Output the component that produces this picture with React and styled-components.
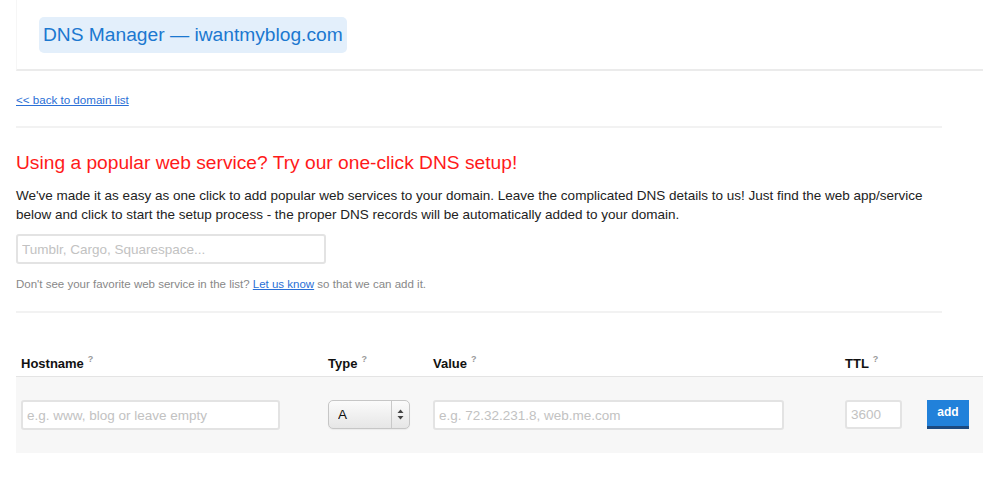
import React from "react";
import styled, { createGlobalStyle } from "styled-components";

const GlobalStyle = createGlobalStyle`
  body {
    margin: 0;
    background: #fff;
    font-family: "Liberation Sans", Arial, sans-serif;
    color: #222;
  }
`;

const Page = styled.div`
  padding-left: 16px;
  width: 967px;
`;

const Header = styled.div`
  height: 71px;
  box-sizing: border-box;
  padding: 17px 0 0 22px;
  border-left: 1px solid #f6f6f6;
  border-bottom: 2px solid #ebebeb;
`;

const Title = styled.h1`
  display: inline-block;
  margin: 0;
  padding: 0 4px;
  height: 36px;
  line-height: 36px;
  background: #e3effb;
  border-radius: 5px;
  color: #1b78d0;
  font-size: 19.2px;
  font-weight: normal;
`;

const Content = styled.div`
  width: 926px;
`;

const BackLink = styled.a`
  display: block;
  margin-top: 22px;
  font-size: 11.6px;
  line-height: 13px;
  color: #2a6fd6;
  text-decoration: underline;
`;

const Divider = styled.hr`
  margin: ${(p) => p.$top}px 0 0;
  border: 0;
  height: 2px;
  background: #f2f2f2;
`;

const Heading = styled.h2`
  margin: 23px 0 0;
  font-size: 19.2px;
  line-height: 24px;
  font-weight: normal;
  color: #ff1a1a;
`;

const Intro = styled.p`
  margin: 11px 0 0;
  font-size: 13.5px;
  line-height: 19px;
  color: #222;
`;

const TextInput = styled.input`
  box-sizing: border-box;
  width: ${(p) => p.$width}px;
  height: ${(p) => p.$height || 30}px;
  padding: 0 4px;
  border: 2px solid #e3e3e3;
  border-radius: 3px;
  background: #fff;
  font-family: inherit;
  font-size: 13.5px;
  color: #333;
  outline: none;
  &::placeholder {
    color: #c2c2c2;
  }
`;

const SearchRow = styled.div`
  margin-top: 10px;
  display: flex;
`;

const Note = styled.p`
  margin: 13px 0 0;
  font-size: 11.5px;
  line-height: 14px;
  color: #888;
  a {
    color: #2a6fd6;
  }
`;

const Table = styled.div`
  margin-top: 38px;
  width: 967px;
`;

const columns = "307px 105px 412px 82px 1fr";

const HeadRow = styled.div`
  display: grid;
  grid-template-columns: ${columns};
  padding: 0 0 4px 5px;
  border-bottom: 1px solid #e4e4e4;
`;

const HeadCell = styled.div`
  font-size: 13px;
  font-weight: bold;
  line-height: 16px;
  color: #111;
`;

const Hint = styled.sup`
  margin-left: 4px;
  font-size: 9px;
  font-weight: bold;
  color: #999;
  vertical-align: 6px;
`;

const EntryRow = styled.div`
  display: grid;
  grid-template-columns: ${columns};
  align-items: start;
  padding: 23px 0 23px 5px;
  background: #f7f7f7;
`;

const SelectBox = styled.div`
  box-sizing: border-box;
  display: flex;
  width: 82px;
  height: 29px;
  border: 1px solid #c6c6c6;
  border-radius: 5px;
  background: linear-gradient(#fbfbfb, #e6e6e6);
  box-shadow: 0 1px 1px rgba(0, 0, 0, 0.05);
`;

const SelectValue = styled.select`
  flex: 1;
  appearance: none;
  border: 0;
  background: transparent;
  padding: 0 0 0 9px;
  font-family: inherit;
  font-size: 13.5px;
  color: #111;
  outline: none;
`;

const Arrows = styled.div`
  width: 17px;
  border-left: 1px solid #c9c9c9;
  display: flex;
  align-items: center;
  justify-content: center;
`;

const AddButton = styled.button`
  box-sizing: border-box;
  width: 42px;
  height: 29px;
  padding: 0 0 2px;
  border: 0;
  border-bottom: 3px solid #1c4a80;
  background: #2181da;
  color: #fff;
  font-family: inherit;
  font-size: 12px;
  font-weight: bold;
`;

export default function App() {
  return (
    <>
      <GlobalStyle />
      <Page>
        <Header>
          <Title>DNS Manager — iwantmyblog.com</Title>
        </Header>
        <Content>
          <BackLink href="#">&lt;&lt; back to domain list</BackLink>
          <Divider $top={20} />
          <Heading>Using a popular web service? Try our one-click DNS setup!</Heading>
          <Intro>
            We've made it as easy as one click to add popular web services to your domain. Leave the
            complicated DNS details to us! Just find the web app/service below and click to start the
            setup process - the proper DNS records will be automatically added to your domain.
          </Intro>
          <SearchRow>
            <TextInput $width={310} placeholder="Tumblr, Cargo, Squarespace..." />
          </SearchRow>
          <Note>
            Don't see your favorite web service in the list? <a href="#">Let us know</a> so that we
            can add it.
          </Note>
          <Divider $top={20} />
        </Content>
        <Table>
          <HeadRow>
            <HeadCell>Hostname<Hint>?</Hint></HeadCell>
            <HeadCell>Type<Hint>?</Hint></HeadCell>
            <HeadCell>Value<Hint>?</Hint></HeadCell>
            <HeadCell>TTL<Hint>?</Hint></HeadCell>
            <HeadCell />
          </HeadRow>
          <EntryRow>
            <TextInput $width={259} placeholder="e.g. www, blog or leave empty" />
            <SelectBox>
              <SelectValue defaultValue="A">
                <option>A</option>
                <option>CNAME</option>
                <option>MX</option>
                <option>TXT</option>
              </SelectValue>
              <Arrows>
                <svg width="7" height="11" viewBox="0 0 7 11">
                  <path d="M3.5 0.5 L6.5 4 H0.5 Z" fill="#444" />
                  <path d="M3.5 10.5 L6.5 7 H0.5 Z" fill="#444" />
                </svg>
              </Arrows>
            </SelectBox>
            <TextInput $width={351} placeholder="e.g. 72.32.231.8, web.me.com" />
            <TextInput $width={57} $height={29} placeholder="3600" />
            <AddButton>add</AddButton>
          </EntryRow>
        </Table>
      </Page>
    </>
  );
}
